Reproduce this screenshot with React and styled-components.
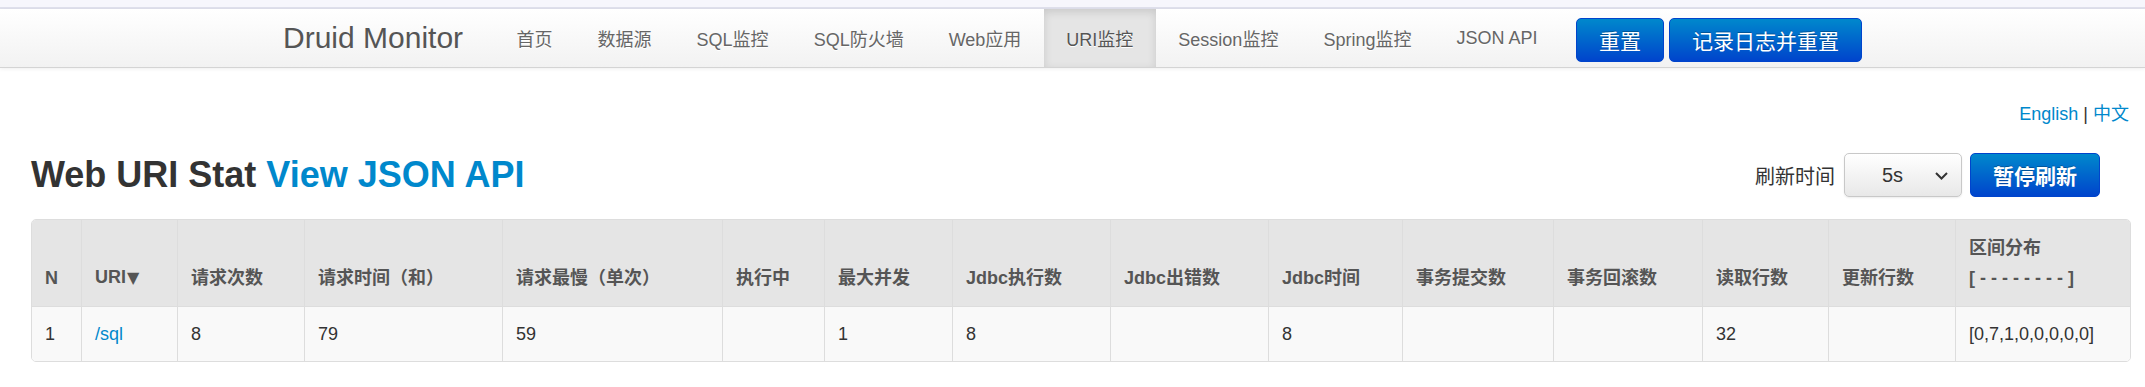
import React from "react";
import styled, { createGlobalStyle, css } from "styled-components";

const GlobalStyle = createGlobalStyle`
  body {
    margin: 0;
    background: #ffffff;
    font-family: "Liberation Sans", "Noto Sans CJK SC", sans-serif;
    color: #333;
  }
`;

const TopStrip = styled.div`
  height: 7px;
  background: #f6f6fc;
  border-bottom: 2px solid #dfe0ec;
`;

const Navbar = styled.div`
  height: 58px;
  background: linear-gradient(to bottom, #ffffff, #f2f2f2);
  border-bottom: 1px solid #d4d4d4;
  box-shadow: 0 1px 4px rgba(0, 0, 0, 0.065);
`;

const NavInner = styled.div`
  height: 100%;
  display: flex;
  justify-content: center;
  align-items: stretch;
  white-space: nowrap;
  & > * {
    flex-shrink: 0;
  }
`;

const Brand = styled.div`
  display: flex;
  align-items: center;
  font-size: 30px;
  color: #555;
  padding-right: 31px;
`;

const NavItem = styled.div`
  display: flex;
  align-items: center;
  padding: 0 22.5px;
  font-size: 18px;
  color: #666;
  text-shadow: 0 1px 0 #fff;
  ${(p) =>
    p.$active &&
    css`
      background: #e5e5e5;
      color: #555;
      box-shadow: inset 0 3px 8px rgba(0, 0, 0, 0.125);
    `}
`;

const NavButtons = styled.div`
  display: flex;
  align-items: center;
  gap: 5px;
  margin-left: 16px;
  padding-top: 4px;
`;

const PrimaryButton = styled.button`
  height: 44px;
  padding: 0 22px;
  font-family: inherit;
  font-size: 21px;
  font-weight: ${(p) => (p.$bold ? 700 : 400)};
  white-space: nowrap;
  color: #fff;
  background: linear-gradient(to bottom, #0088cc, #0044cc);
  border: 1px solid #0044cc;
  border-radius: 5px;
  text-shadow: 0 -1px 0 rgba(0, 0, 0, 0.25);
  cursor: pointer;
`;

const Content = styled.div`
  padding: 33px 16px 0 31px;
`;

const LangBar = styled.div`
  text-align: right;
  font-size: 18px;
  line-height: 26px;
  color: #333;
  & a {
    color: #0088cc;
    text-decoration: none;
  }
`;

const HeaderRow = styled.div`
  display: flex;
  justify-content: space-between;
  align-items: center;
  height: 44px;
  margin-top: 26px;
`;

const Title = styled.h3`
  margin: 0;
  font-size: 36px;
  font-weight: 700;
  color: #333;
  & a {
    color: #0088cc;
    text-decoration: none;
  }
`;

const Controls = styled.div`
  display: flex;
  align-items: center;
  margin-right: 29px;
`;

const Label = styled.span`
  font-size: 20px;
  color: #333;
  margin-right: 9px;
`;

const SelectWrap = styled.div`
  position: relative;
  width: 118px;
  height: 44px;
  margin-right: 8px;
`;

const Select = styled.select`
  appearance: none;
  width: 100%;
  height: 100%;
  padding: 0 0 0 37px;
  font-family: inherit;
  font-size: 20px;
  color: #333;
  background: linear-gradient(to bottom, #ffffff, #e8e8e8);
  border: 1px solid #c8c8c8;
  border-radius: 5px;
  box-shadow: 0 1px 2px rgba(0, 0, 0, 0.08);
`;

const Chevron = styled.svg`
  position: absolute;
  right: 14px;
  top: 19px;
  pointer-events: none;
`;

const Table = styled.table`
  margin-top: 22px;
  width: 2098px;
  table-layout: fixed;
  border-collapse: separate;
  border-spacing: 0;
  border: 1px solid #dddddd;
  border-radius: 5px;
  overflow: hidden;
  font-size: 18px;
`;

const Th = styled.th`
  text-align: left;
  vertical-align: bottom;
  padding: 13px 13px;
  line-height: 30px;
  font-weight: 700;
  color: #555;
  background: #e5e5e5;
  border-left: ${(p) => (p.$first ? "none" : "1px solid #dddddd")};
  white-space: nowrap;
`;

const SortArrow = styled.span`
  font-family: "DejaVu Sans", sans-serif;
  font-size: 16px;
  margin-left: 1px;
`;

const Td = styled.td`
  padding: 12px 13px;
  line-height: 30px;
  color: #333;
  background: #f9f9f9;
  border-top: 1px solid #dddddd;
  border-left: ${(p) => (p.$first ? "none" : "1px solid #dddddd")};
  & a {
    color: #0088cc;
    text-decoration: none;
  }
`;

const navItems = [
  "首页",
  "数据源",
  "SQL监控",
  "SQL防火墙",
  "Web应用",
  "URI监控",
  "Session监控",
  "Spring监控",
  "JSON API",
];

const columns = [
  { title: "N", w: 49 },
  { title: "URI", sort: true, w: 96 },
  { title: "请求次数", w: 127 },
  { title: "请求时间（和）", w: 198 },
  { title: "请求最慢（单次）", w: 220 },
  { title: "执行中", w: 102 },
  { title: "最大并发", w: 128 },
  { title: "Jdbc执行数", w: 158 },
  { title: "Jdbc出错数", w: 158 },
  { title: "Jdbc时间", w: 134 },
  { title: "事务提交数", w: 151 },
  { title: "事务回滚数", w: 149 },
  { title: "读取行数", w: 126 },
  { title: "更新行数", w: 127 },
  { title: "区间分布", sub: "[ - - - - - - - - ]", w: 175 },
];

const row = ["1", "/sql", "8", "79", "59", "", "1", "8", "", "8", "", "", "32", "", "[0,7,1,0,0,0,0,0]"];

export default function App() {
  return (
    <>
      <GlobalStyle />
      <TopStrip />
      <Navbar>
        <NavInner>
          <Brand>Druid Monitor</Brand>
          {navItems.map((item) => (
            <NavItem key={item} $active={item === "URI监控"}>
              {item}
            </NavItem>
          ))}
          <NavButtons>
            <PrimaryButton>重置</PrimaryButton>
            <PrimaryButton>记录日志并重置</PrimaryButton>
          </NavButtons>
        </NavInner>
      </Navbar>

      <Content>
        <LangBar>
          <a href="#">English</a> | <a href="#">中文</a>
        </LangBar>

        <HeaderRow>
          <Title>
            Web URI Stat <a href="#">View JSON API</a>
          </Title>
          <Controls>
            <Label>刷新时间</Label>
            <SelectWrap>
              <Select defaultValue="5">
                <option value="5">5s</option>
                <option value="10">10s</option>
                <option value="20">20s</option>
                <option value="30">30s</option>
                <option value="60">60s</option>
              </Select>
              <Chevron width="13" height="8" viewBox="0 0 13 8">
                <path d="M1 1 L6.5 6.5 L12 1" fill="none" stroke="#333" strokeWidth="2" />
              </Chevron>
            </SelectWrap>
            <PrimaryButton $bold>暂停刷新</PrimaryButton>
          </Controls>
        </HeaderRow>

        <Table>
          <colgroup>
            {columns.map((c, i) => (
              <col key={i} style={{ width: c.w }} />
            ))}
          </colgroup>
          <thead>
            <tr>
              {columns.map((c, i) => (
                <Th key={i} $first={i === 0}>
                  {c.title}
                  {c.sort && <SortArrow>▼</SortArrow>}
                  {c.sub && (
                    <>
                      <br />
                      {c.sub}
                    </>
                  )}
                </Th>
              ))}
            </tr>
          </thead>
          <tbody>
            <tr>
              {row.map((v, i) => (
                <Td key={i} $first={i === 0}>
                  {i === 1 ? <a href="#">{v}</a> : v}
                </Td>
              ))}
            </tr>
          </tbody>
        </Table>
      </Content>
    </>
  );
}
